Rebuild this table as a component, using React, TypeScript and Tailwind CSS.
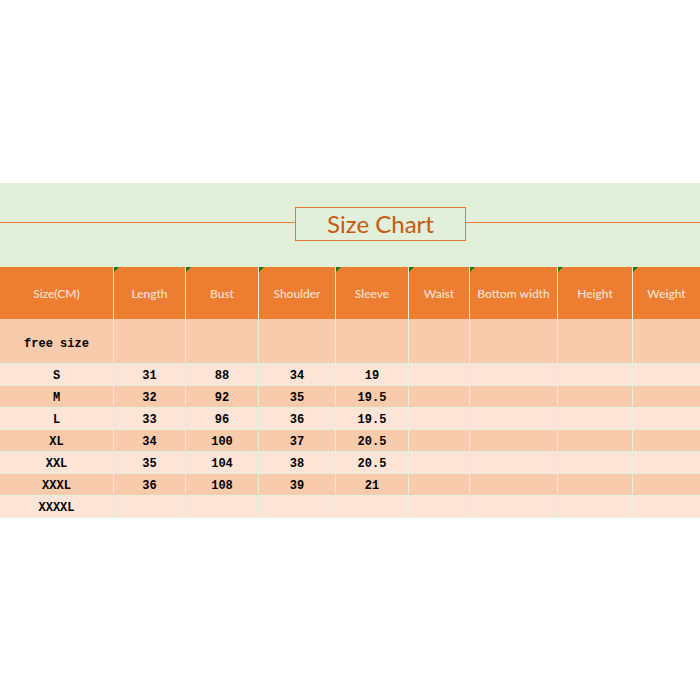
const cols = 'grid grid-cols-[113px_71px_72px_76px_72px_60px_87px_74px_1fr] gap-x-px';

const headers = ['Size(CM)', 'Length', 'Bust', 'Shoulder', 'Sleeve', 'Waist', 'Bottom width', 'Height', 'Weight'];

const rows: string[][] = [
  ['S', '31', '88', '34', '19'],
  ['M', '32', '92', '35', '19.5'],
  ['L', '33', '96', '36', '19.5'],
  ['XL', '34', '100', '37', '20.5'],
  ['XXL', '35', '104', '38', '20.5'],
  ['XXXL', '36', '108', '39', '21'],
  ['XXXXL'],
];

export default function App() {
  return (
    <div className="w-[700px] h-[700px] bg-white overflow-hidden">
      <div className="h-[183px]" />

      {/* title band */}
      <div className="h-[84px] bg-[#e2efda] flex items-start pt-[24px]">
        <div className="w-[295px] h-px bg-[#ed7d31] mt-[15px]" />
        <div className="w-[171px] h-[34px] border border-[#e07a35] flex items-center justify-center">
          <span className="text-[24px] leading-none text-[#c55a11] font-['Lato',sans-serif]">Size Chart</span>
        </div>
        <div className="flex-1 h-px bg-[#ed7d31] mt-[15px]" />
      </div>

      <div className="bg-[#e2efda] gap-y-px flex flex-col pb-px">
        {/* header */}
        <div className={cols}>
          {headers.map((h, i) => (
            <div
              key={h}
              className="relative h-[52px] bg-[#ed7d31] flex items-center justify-center pt-[2px] text-[12px] font-medium text-[#fce4d6] font-['Lato',sans-serif]"
            >
              {i > 0 && (
                <div className="absolute left-0 top-0 w-0 h-0 border-t-[5px] border-t-[#107c10] border-r-[5px] border-r-transparent" />
              )}
              {h}
            </div>
          ))}
        </div>

        {/* free size */}
        <div className={`${cols} -mt-px`}>
          {headers.map((h, i) => (
            <div
              key={h}
              className="h-[44px] bg-[#f8cbad] flex items-center justify-center pt-[5px] text-[12px] font-bold text-black font-['Liberation_Mono',monospace]"
            >
              {i === 0 ? 'free size' : ''}
            </div>
          ))}
        </div>

        {rows.map((r, ri) => (
          <div key={r[0]} className={cols}>
            {headers.map((h, i) => (
              <div
                key={h}
                className={`h-[21px] flex items-center justify-center pt-[2px] text-[12px] font-bold text-black font-['Liberation_Mono',monospace] ${
                  ri % 2 === 0 ? 'bg-[#fce4d6]' : 'bg-[#f8cbad]'
                }`}
              >
                {r[i] ?? ''}
              </div>
            ))}
          </div>
        ))}
      </div>
    </div>
  );
}
